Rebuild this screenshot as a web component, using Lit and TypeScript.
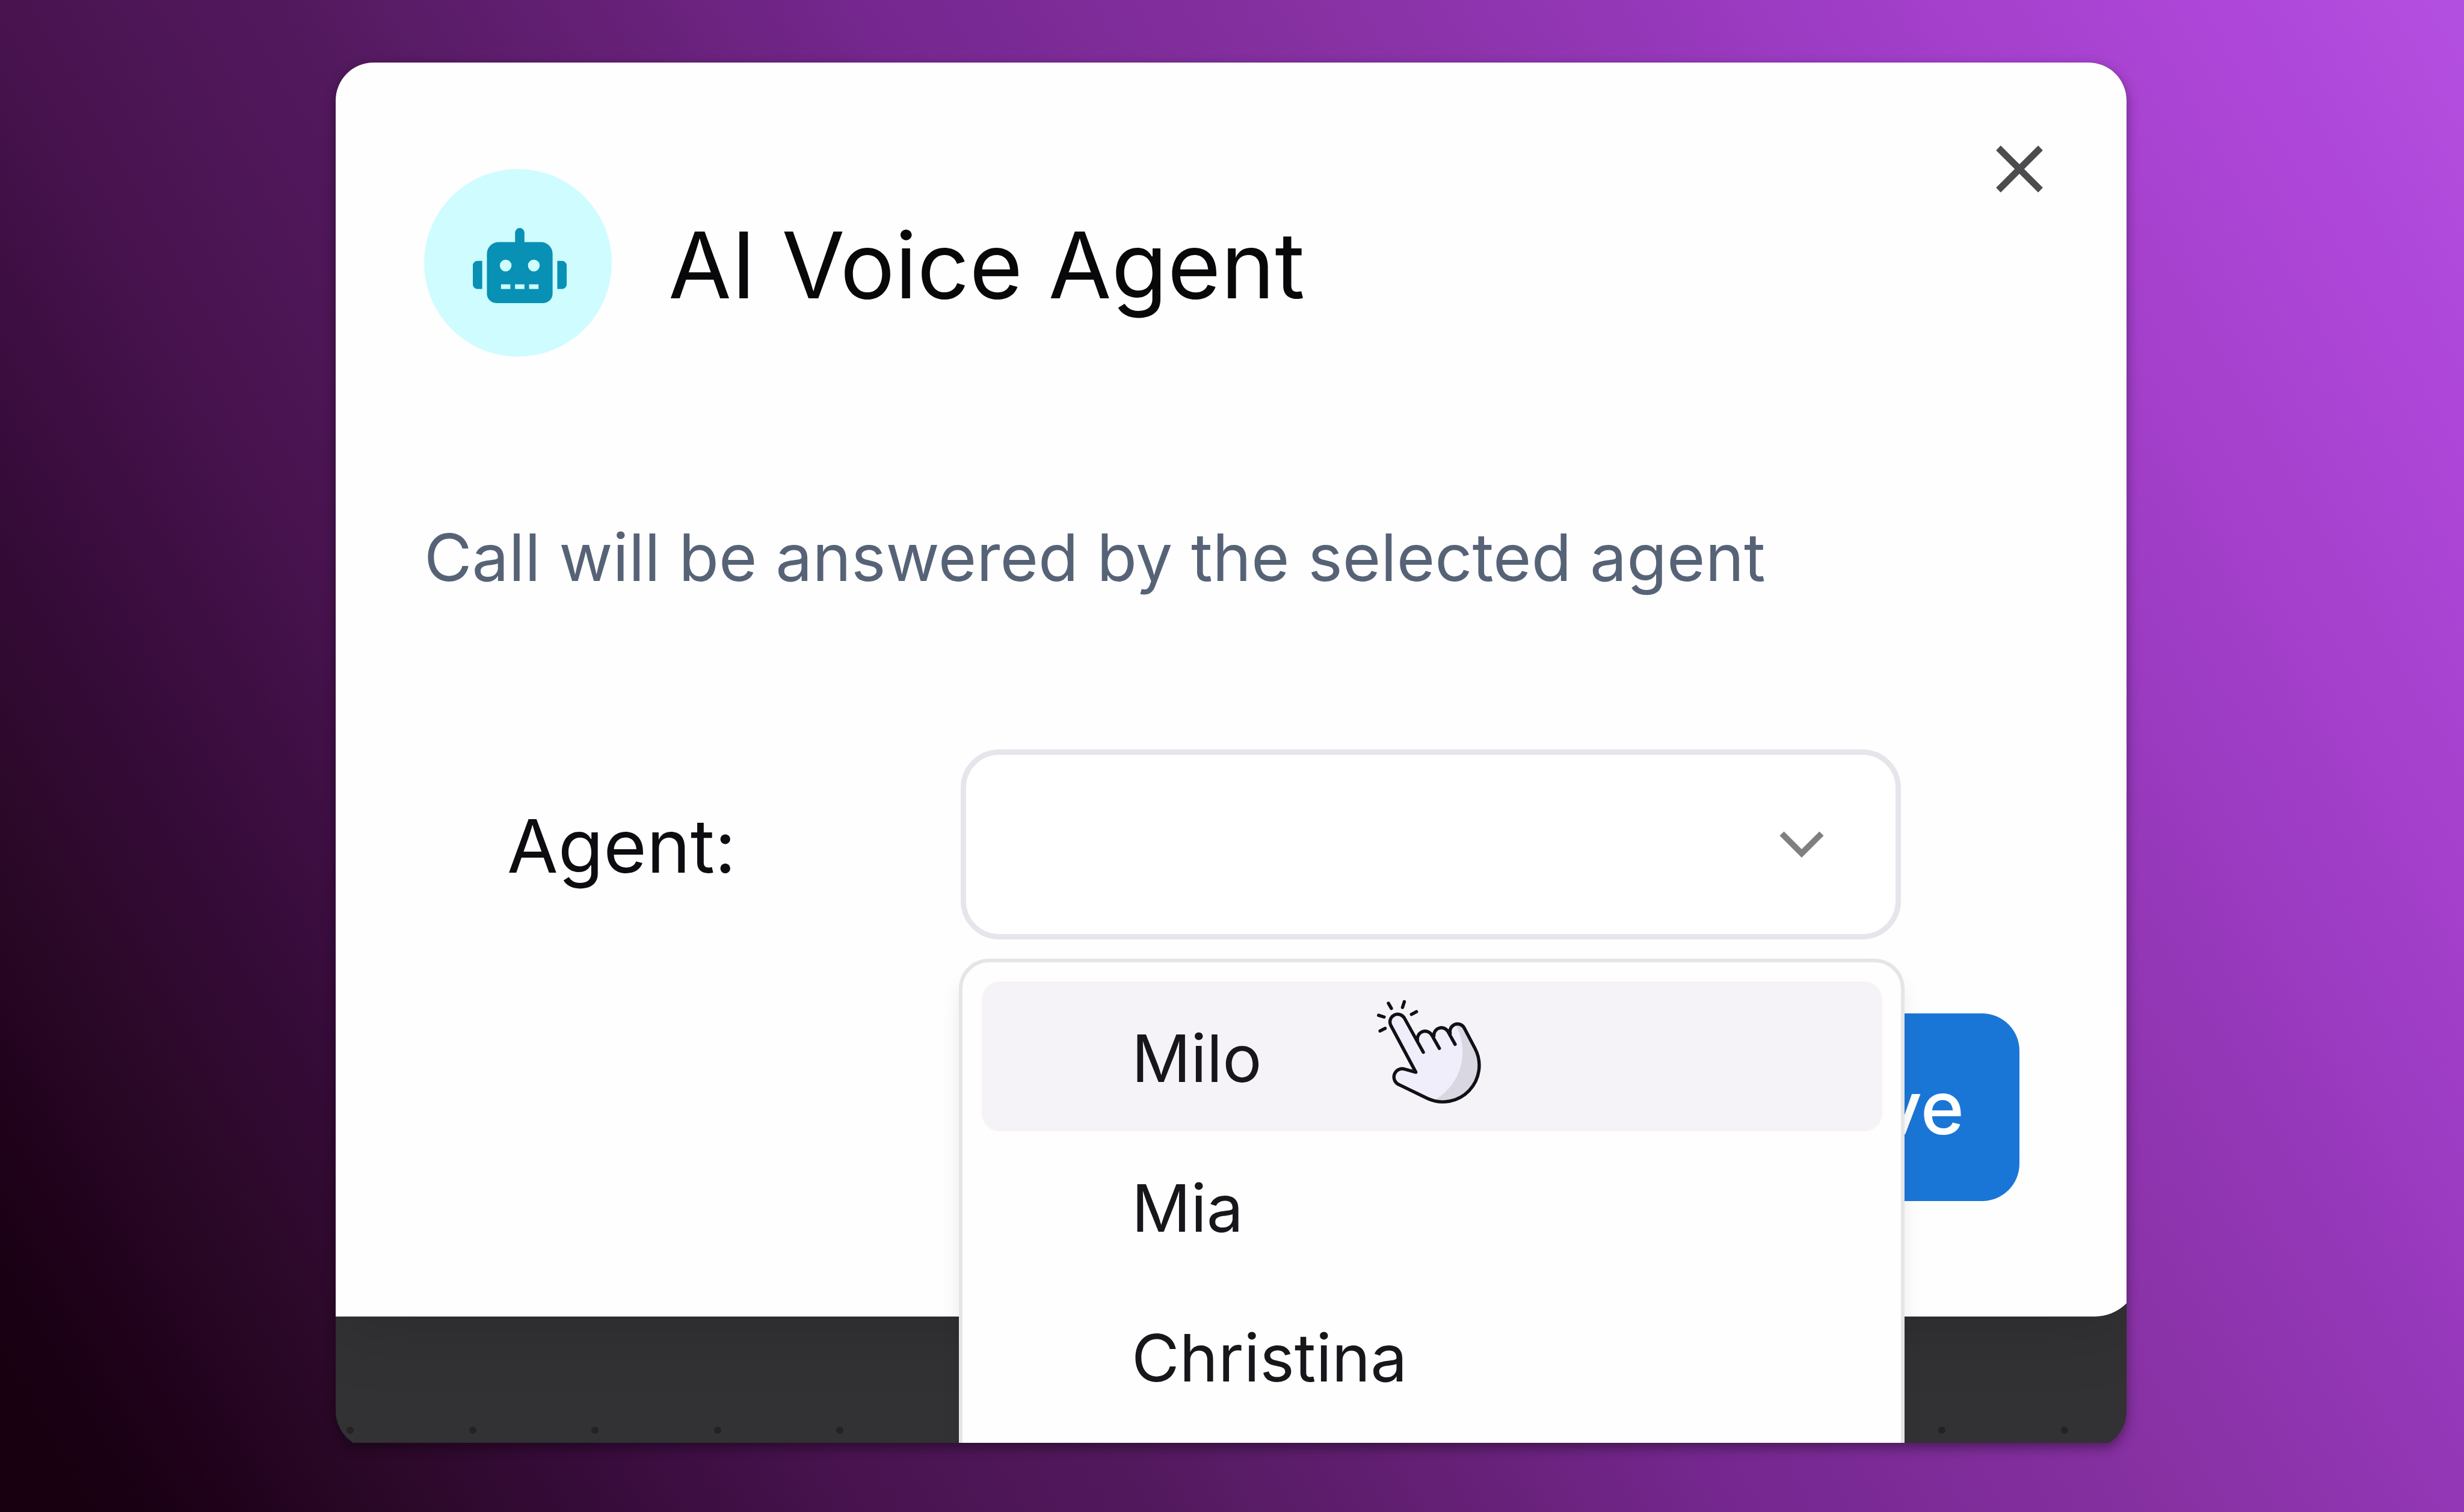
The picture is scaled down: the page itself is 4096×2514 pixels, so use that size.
import { LitElement, html, css } from "lit";
import { customElement, property, state } from "lit/decorators.js";
import { classMap } from "lit/directives/class-map.js";

const AGENTS = ["Milo", "Mia", "Christina"];

/** Tinted disc holding the robot glyph. */
@customElement("agent-badge")
class AgentBadge extends LitElement {
  static styles = css`
    :host {
      display: grid;
      place-items: center;
      box-sizing: border-box;
      width: 312px;
      height: 312px;
      padding: 8px 0 0 5px;
      border-radius: 50%;
      background: #cffcff;
    }
    .glyph {
      display: block;
      width: 156px;
      height: 125px;
      fill: #0891b4;
    }
  `;

  render() {
    return html`
      <svg class="glyph" viewBox="0 0 640 512" aria-hidden="true">
        <path
          d="M32,224H64V416H32A31.96,31.96,0,0,1,0,384V256A31.96,31.96,0,0,1,32,224Zm512-48V448a64.06,64.06,0,0,1-64,64H160a64.06,64.06,0,0,1-64-64V176a79.97,79.97,0,0,1,80-80H288V32a32,32,0,0,1,64,0V96H464A79.97,79.97,0,0,1,544,176ZM264,256a40,40,0,1,0-40,40A40,40,0,0,0,264,256Zm-8,128H192v32h64Zm96,0H288v32h64ZM456,256a40,40,0,1,0-40,40A40,40,0,0,0,456,256Zm-8,128H384v32h64ZM640,256V384a31.96,31.96,0,0,1-32,32H576V224h32A31.96,31.96,0,0,1,640,256Z"
        />
      </svg>
    `;
  }
}

/** Pointing hand with click sparks. */
@customElement("tap-hand")
class TapHand extends LitElement {
  static styles = css`
    :host {
      display: block;
      width: 252px;
      height: 237px;
      pointer-events: none;
    }
    .hand {
      display: block;
      width: 100%;
      height: 100%;
      fill: none;
      stroke-linecap: round;
      stroke-linejoin: round;
    }
    .skin {
      fill: #f0eefb;
    }
    .shade {
      fill: #d9d7e2;
    }
    .line {
      stroke: #111015;
      stroke-width: 22;
    }
  `;

  render() {
    return html`
      <svg class="hand" viewBox="0 0 1020 960" aria-hidden="true">
        <path
          class="skin"
          d="M452 607L282 289A52 52 0 0 1 374 241L456 395A51 51 0 0 1 563 363A51 51 0 0 1 670 335A51 51 0 0 1 776 306L850 447A245 245 0 0 1 529 783L340 691A55 55 0 0 1 380 587Z"
        />
        <path
          class="shade"
          d="M714 280C758 345 767 430 766 480C764 610 690 730 575 797A245 245 0 0 0 850 447L776 306A51 51 0 0 0 714 280Z"
        />
        <path
          class="line"
          d="M502 472L374 241A52 52 0 0 0 282 289L452 607L380 587A55 55 0 0 0 340 691L529 783A245 245 0 0 0 850 447L776 306A51 51 0 0 0 683 345"
        />
        <path class="line" d="M463 392A52 52 0 0 1 560 358L610 446" />
        <path class="line" d="M573 362A51 51 0 0 1 667 331L716 419" />
        <path
          class="line"
          d="M267 142L287 177M374 132L362 170M456 199L422 217M201 223L238 235M211 329L245 311"
        />
      </svg>
    `;
  }
}

/** Bordered drop-down with its open option list. */
@customElement("agent-select")
class AgentSelect extends LitElement {
  @property({ type: Array }) options: string[] = [];
  @state() private active = "Milo";

  static styles = css`
    :host {
      display: grid;
      grid-template-columns: 754px 1fr;
      align-items: center;
      color: #0d0c10;
    }
    .label {
      padding-top: 6px;
      font-size: 123px;
      line-height: 152px;
    }
    .field {
      position: relative;
      display: grid;
      align-items: center;
    }
    .box {
      grid-area: 1 / 1;
      box-sizing: border-box;
      width: 100%;
      height: 316px;
      padding: 0 96px;
      border: 9px solid #e4e6eb;
      border-radius: 64px;
      background: #ffffff;
      color: inherit;
      font: inherit;
      font-size: 109px;
      appearance: none;
      outline: none;
    }
    .chevron {
      grid-area: 1 / 1;
      justify-self: end;
      width: 76px;
      height: 46px;
      margin-right: 127px;
      fill: none;
      stroke: #7f7e80;
      stroke-width: 10;
      pointer-events: none;
    }
    .menu {
      position: absolute;
      z-index: 2;
      top: calc(100% + 32px);
      left: -3px;
      right: -6px;
      margin: 0;
      padding: 32px 31px 120px 32px;
      list-style: none;
      border: 6px solid #e5e4e7;
      border-radius: 50px 50px 0 0;
      background: #fefefe;
      box-shadow: 0 25px 38px -6px rgba(0, 0, 0, 0.1);
    }
    .row {
      position: relative;
    }
    .option {
      display: block;
      width: 100%;
      height: 249px;
      padding: 6px 0 0 249px;
      border: 0;
      border-radius: 30px;
      background: transparent;
      color: #17161a;
      font: inherit;
      font-size: 109px;
      line-height: 243px;
      text-align: left;
      cursor: pointer;
    }
    .option.active {
      background: #f5f3f7;
    }
    .pointer {
      position: absolute;
      top: 1px;
      left: 610px;
    }
  `;

  render() {
    return html`
      <label class="label" for="agent">Agent:</label>
      <div class="field">
        <select class="box" id="agent">
          <option value="" selected></option>
          ${this.options.map((name) => html`<option value=${name}>${name}</option>`)}
        </select>
        <svg class="chevron" viewBox="0 0 76 46" aria-hidden="true">
          <path d="M5 5L38 38L71 5" />
        </svg>
        <ul class="menu">
          ${this.options.map((name) => {
            const active = name === this.active;
            return html`
              <li class="row">
                <button
                  type="button"
                  class=${classMap({ option: true, active })}
                  @mouseenter=${() => (this.active = name)}
                >
                  ${name}
                </button>
                ${active ? html`<tap-hand class="pointer"></tap-hand>` : null}
              </li>
            `;
          })}
        </ul>
      </div>
    `;
  }
}

@customElement("app-root")
class AppRoot extends LitElement {
  static styles = css`
    :host {
      display: block;
      font-family: Inter, "Liberation Sans", sans-serif;
    }
    .stage {
      display: grid;
      box-sizing: border-box;
      min-height: 100vh;
      padding: 104px 561px 115px 558px;
      background: linear-gradient(
        60deg,
        #190010 0%,
        #190012 4%,
        #22031e 8%,
        #2b0828 12%,
        #380c3c 19%,
        #48134f 26%,
        #53195e 35%,
        #672179 45%,
        #75278f 52%,
        #8530a0 64%,
        #9236b4 73%,
        #9d3cc4 80%,
        #a540cc 85%,
        #ad46d8 92%,
        #b34fe0 100%
      );
    }
    .frame {
      display: grid;
      filter: drop-shadow(0 8px 10px rgba(0, 0, 0, 0.4));
    }
    .window {
      display: grid;
      overflow: hidden;
    }
    .card {
      display: flex;
      flex-direction: column;
      margin-bottom: -10px;
      overflow: hidden;
      border-radius: 63px;
      background: #323133;
    }
    .dialog {
      position: relative;
      z-index: 1;
      margin-right: -22px;
      padding: 115px 138px 192px 147px;
      border-radius: 0 0 75px 0;
      background: #fefefe;
      box-shadow: 0 12px 120px rgba(0, 0, 0, 0.15);
    }
    .header {
      display: flex;
      align-items: flex-start;
      justify-content: space-between;
    }
    .brand {
      display: flex;
      align-items: center;
      gap: 94px;
      padding-top: 62px;
    }
    .title {
      margin: 0;
      padding-top: 8px;
      color: #08080a;
      font-size: 152px;
      font-weight: 400;
      line-height: 190px;
    }
    .close {
      display: grid;
      place-items: center;
      width: 124px;
      height: 124px;
      padding: 0;
      border: 0;
      background: transparent;
      cursor: pointer;
    }
    .cross {
      width: 84px;
      height: 84px;
      fill: none;
      stroke: #4c4b4d;
      stroke-width: 11;
    }
    .hint {
      margin: 263px 0 0;
      color: #566377;
      font-size: 109px;
      line-height: 140px;
    }
    .form {
      margin: 250px 259px 0 138px;
    }
    .actions {
      display: flex;
      justify-content: flex-end;
      margin-top: 123px;
      padding-right: 62px;
    }
    .save {
      height: 312px;
      padding: 0 92px;
      border: 0;
      border-radius: 62px;
      background: #1a76d6;
      color: #ffffff;
      font: inherit;
      font-size: 123px;
      font-weight: 500;
      cursor: pointer;
    }
    .canvas {
      display: flex;
      align-items: flex-end;
      justify-content: space-between;
      flex: 1;
      padding: 0 97px 25px 18px;
    }
    .dot {
      width: 12px;
      height: 12px;
      border-radius: 50%;
      background: #232324;
    }
  `;

  render() {
    return html`
      <main class="stage">
        <div class="frame">
          <div class="window">
            <div class="card">
              <section class="dialog" role="dialog" aria-labelledby="title">
                <header class="header">
                  <div class="brand">
                    <agent-badge></agent-badge>
                    <h1 class="title" id="title">AI Voice Agent</h1>
                  </div>
                  <button class="close" type="button" aria-label="Close">
                    <svg class="cross" viewBox="0 0 84 84" aria-hidden="true">
                      <path d="M7 7L77 77M77 7L7 77" />
                    </svg>
                  </button>
                </header>
                <p class="hint">Call will be answered by the selected agent</p>
                <agent-select class="form" .options=${AGENTS}></agent-select>
                <div class="actions">
                  <button class="save" type="button">Save</button>
                </div>
              </section>
              <div class="canvas" aria-hidden="true">
                ${Array.from({ length: 15 }, () => html`<span class="dot"></span>`)}
              </div>
            </div>
          </div>
        </div>
      </main>
    `;
  }
}
